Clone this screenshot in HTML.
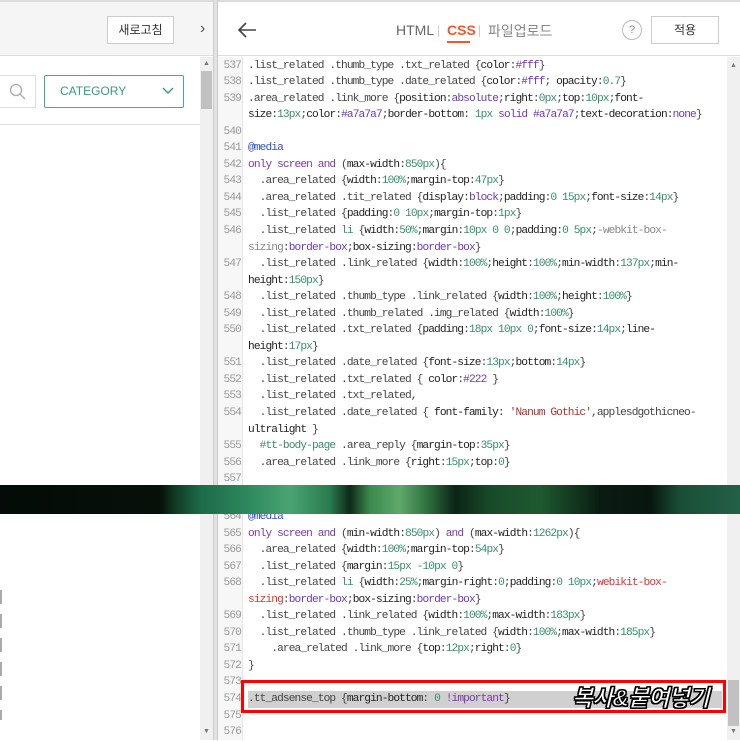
<!DOCTYPE html>
<html><head><meta charset="utf-8"><style>
*{margin:0;padding:0;box-sizing:border-box}
body{width:740px;height:740px;overflow:hidden;background:#fff;position:relative;font-family:"Liberation Sans","Noto Sans CJK KR",sans-serif}
.abs{position:absolute}
.code{position:absolute;left:218px;width:509px;font-family:"Liberation Mono","DejaVu Sans Mono",monospace;font-size:11.2px;letter-spacing:-0.9px;color:#444}
.r{height:16.55px;line-height:16.55px;white-space:pre;position:relative;padding-left:30px}
.n{position:absolute;left:0;width:23px;text-align:right;color:#999}
.g{color:#3b8c6e}.p{color:#6b3bb0}.k{color:#7a3aa8}.b{color:#3050c8}.red{color:#d33}.s{color:#a33}.d{color:#222}
</style></head><body>
<div class="abs" style="left:0;top:0;width:740px;height:56px;background:#f5f5f5;border-bottom:1px solid #ddd"></div>
<div class="abs" style="left:0;top:0;width:740px;height:2px;background:#ddd"></div>
<div class="abs" style="left:107px;top:16px;width:67px;height:28px;border:1px solid #ccc;background:#fff;font-size:12px;line-height:26px;text-align:center;color:#333">새로고침</div>
<div class="abs" style="left:200px;top:20px;font-size:16px;color:#555">›</div>
<div class="abs" style="left:213px;top:0;width:5px;height:740px;background:#e2e2e2;border-left:1px solid #ccc;border-right:1px solid #ccc"></div>
<div class="abs" style="left:218px;top:2px;width:522px;height:54px;background:#fff;border-bottom:1px solid #ddd"></div>
<svg class="abs" style="left:236px;top:20px" width="22" height="20"><path d="M20 10H3M10 3L3 10L10 17" fill="none" stroke="#444" stroke-width="1.6"/></svg>
<div class="abs" style="left:396px;top:22px;font-size:14px;color:#666">HTML</div>
<div class="abs" style="left:438px;top:25px;width:1px;height:12px;background:#ccc"></div>
<div class="abs" style="left:447px;top:22px;font-size:14px;color:#f05a28;font-weight:bold">CSS</div>
<div class="abs" style="left:447px;top:41px;width:23px;height:2px;background:#f05a28"></div>
<div class="abs" style="left:479px;top:25px;width:1px;height:12px;background:#ccc"></div>
<div class="abs" style="left:488px;top:21px;font-size:14px;color:#888">파일업로드</div>
<div class="abs" style="left:622px;top:20px;width:20px;height:20px;border:1px solid #bbb;border-radius:50%;font-size:11px;line-height:18px;text-align:center;color:#888">?</div>
<div class="abs" style="left:651px;top:16px;width:68px;height:28px;border:1px solid #ccc;background:#fff;font-size:12px;line-height:26px;text-align:center;color:#333">적용</div>
<div class="abs" style="left:0;top:75px;width:36px;height:33px;border:1px solid #ddd;border-left:none"></div>
<svg class="abs" style="left:9px;top:83px" width="18" height="18"><circle cx="7" cy="7" r="5.5" fill="none" stroke="#aaa" stroke-width="1.3"/><path d="M11 11L16 16" stroke="#aaa" stroke-width="1.3"/></svg>
<div class="abs" style="left:44px;top:75px;width:140px;height:33px;border:1px solid #3fae8e;border-radius:2px;font-size:12px;line-height:31px;padding-left:15px;color:#3a9a7e">CATEGORY</div>
<svg class="abs" style="left:162px;top:87px" width="12" height="8"><path d="M1 1L6 6L11 1" fill="none" stroke="#3a9a7e" stroke-width="1.4"/></svg>
<div class="abs" style="left:0;top:124px;width:200px;height:1px;background:#ddd"></div>
<div class="abs" style="left:200px;top:57px;width:13px;height:683px;background:#f0f0f0"></div>
<div class="abs" style="left:201px;top:71px;width:11px;height:38px;background:#c1c1c1"></div>
<div class="abs" style="left:203px;top:60px;font-size:7px;color:#777">▲</div>
<div class="abs" style="left:203px;top:728px;font-size:7px;color:#777">▼</div>
<div class="abs" style="left:0;top:580px;width:2px;height:140px;background:repeating-linear-gradient(#fff 0,#fff 10px,#aaa 10px,#aaa 24px)"></div>
<div class="abs" style="left:218px;top:57px;width:25px;height:683px;background:#f7f7f7;border-right:1px solid #e6e6e6"></div>
<div class="abs" style="left:727px;top:57px;width:13px;height:683px;background:#f0f0f0"></div>
<div class="abs" style="left:728px;top:680px;width:11px;height:46px;background:#c1c1c1"></div>
<div class="abs" style="left:730px;top:62px;font-size:7px;color:#777">▲</div>
<div class="abs" style="left:730px;top:728px;font-size:7px;color:#777">▼</div>
<div class="code" style="top:57.5px">
<div class="r"><span class="n">537</span>.list_related .thumb_type .txt_related {<span class="d">color</span>:<span class="p">#fff</span>}</div>
<div class="r"><span class="n">538</span>.list_related .thumb_type .date_related {<span class="d">color</span>:<span class="p">#fff</span>; <span class="d">opacity</span>:<span class="g">0.7</span>}</div>
<div class="r"><span class="n">539</span>.area_related .link_more {<span class="d">position</span>:<span class="p">absolute</span>;<span class="d">right</span>:<span class="g">0px</span>;<span class="d">top</span>:<span class="g">10px</span>;<span class="d">font-</span></div>
<div class="r"><span class="d">size</span>:<span class="g">13px</span>;<span class="d">color</span>:<span class="p">#a7a7a7</span>;<span class="d">border-bottom</span>: <span class="g">1px</span> <span class="p">solid</span> <span class="p">#a7a7a7</span>;<span class="d">text-decoration</span>:<span class="p">none</span>}</div>
<div class="r"><span class="n">540</span></div>
<div class="r"><span class="n">541</span><span class="b">@media</span></div>
<div class="r"><span class="n">542</span><span class="k">only screen and</span> (<span class="d">max-width</span>:<span class="g">850px</span>){</div>
<div class="r"><span class="n">543</span>  .area_related {<span class="d">width</span>:<span class="g">100%</span>;<span class="d">margin-top</span>:<span class="g">47px</span>}</div>
<div class="r"><span class="n">544</span>  .area_related .tit_related {<span class="d">display</span>:<span class="p">block</span>;<span class="d">padding</span>:<span class="g">0 15px</span>;<span class="d">font-size</span>:<span class="g">14px</span>}</div>
<div class="r"><span class="n">545</span>  .list_related {<span class="d">padding</span>:<span class="g">0 10px</span>;<span class="d">margin-top</span>:<span class="g">1px</span>}</div>
<div class="r"><span class="n">546</span>  .list_related <span class="g">li</span> {<span class="d">width</span>:<span class="g">50%</span>;<span class="d">margin</span>:<span class="g">10px 0 0</span>;<span class="d">padding</span>:<span class="g">0 5px</span>;<span style="color:#888">-webkit-box-</span></div>
<div class="r"><span style="color:#888">sizing</span>:<span class="p">border-box</span>;<span class="d">box-sizing</span>:<span class="p">border-box</span>}</div>
<div class="r"><span class="n">547</span>  .list_related .link_related {<span class="d">width</span>:<span class="g">100%</span>;<span class="d">height</span>:<span class="g">100%</span>;<span class="d">min-width</span>:<span class="g">137px</span>;<span class="d">min-</span></div>
<div class="r"><span class="d">height</span>:<span class="g">150px</span>}</div>
<div class="r"><span class="n">548</span>  .list_related .thumb_type .link_related {<span class="d">width</span>:<span class="g">100%</span>;<span class="d">height</span>:<span class="g">100%</span>}</div>
<div class="r"><span class="n">549</span>  .list_related .thumb_related .img_related {<span class="d">width</span>:<span class="g">100%</span>}</div>
<div class="r"><span class="n">550</span>  .list_related .txt_related {<span class="d">padding</span>:<span class="g">18px 10px 0</span>;<span class="d">font-size</span>:<span class="g">14px</span>;<span class="d">line-</span></div>
<div class="r"><span class="d">height</span>:<span class="g">17px</span>}</div>
<div class="r"><span class="n">551</span>  .list_related .date_related {<span class="d">font-size</span>:<span class="g">13px</span>;<span class="d">bottom</span>:<span class="g">14px</span>}</div>
<div class="r"><span class="n">552</span>  .list_related .txt_related { <span class="d">color</span>:<span class="p">#222</span> }</div>
<div class="r"><span class="n">553</span>  .list_related .txt_related,</div>
<div class="r"><span class="n">554</span>  .list_related .date_related { <span class="d">font-family</span>: <span class="s">'Nanum Gothic'</span>,applesdgothicneo-</div>
<div class="r"><span class="d">ultralight</span> }</div>
<div class="r"><span class="n">555</span>  <span class="g">#tt-body-page</span> .area_reply {<span class="d">margin-top</span>:<span class="g">35px</span>}</div>
<div class="r"><span class="n">556</span>  .area_related .link_more {<span class="d">right</span>:<span class="g">15px</span>;<span class="d">top</span>:<span class="g">0</span>}</div>
<div class="r"><span class="n">557</span></div>
</div>
<div class="code" style="top:509px">
<div class="r"><span class="n">564</span><span class="b">@media</span></div>
<div class="r"><span class="n">565</span><span class="k">only screen and</span> (<span class="d">min-width</span>:<span class="g">850px</span>) <span class="k">and</span> (<span class="d">max-width</span>:<span class="g">1262px</span>){</div>
<div class="r"><span class="n">566</span>  .area_related {<span class="d">width</span>:<span class="g">100%</span>;<span class="d">margin-top</span>:<span class="g">54px</span>}</div>
<div class="r"><span class="n">567</span>  .list_related {<span class="d">margin</span>:<span class="g">15px -10px 0</span>}</div>
<div class="r"><span class="n">568</span>  .list_related <span class="g">li</span> {<span class="d">width</span>:<span class="g">25%</span>;<span class="d">margin-right</span>:<span class="g">0</span>;<span class="d">padding</span>:<span class="g">0 10px</span>;<span class="red">webikit-box-</span></div>
<div class="r"><span class="red">sizing</span>:<span class="p">border-box</span>;<span class="d">box-sizing</span>:<span class="p">border-box</span>}</div>
<div class="r"><span class="n">569</span>  .list_related .link_related {<span class="d">width</span>:<span class="g">100%</span>;<span class="d">max-width</span>:<span class="g">183px</span>}</div>
<div class="r"><span class="n">570</span>  .list_related .thumb_type .link_related {<span class="d">width</span>:<span class="g">100%</span>;<span class="d">max-width</span>:<span class="g">185px</span>}</div>
<div class="r"><span class="n">571</span>    .area_related .link_more {<span class="d">top</span>:<span class="g">12px</span>;<span class="d">right</span>:<span class="g">0</span>}</div>
<div class="r"><span class="n">572</span>}</div>
<div class="r"><span class="n">573</span></div>
<div class="r"><span class="n">574</span><span style="background:#d0d0d0;display:inline-block;width:474px">.tt_adsense_top {<span class="d">margin-bottom</span>: <span class="g">0</span> <span class="k">!important</span>}</span></div>
<div class="r"><span class="n">575</span></div>
<div class="r"><span class="n">576</span></div>
</div>
<div class="abs" style="left:0;top:485px;width:740px;height:29px;background:linear-gradient(90deg,#040b08 0,#061009 160px,#0f3a24 175px,#1c6a48 200px,#2f8a5e 250px,#4aa472 290px,#2a7a4e 330px,#0e2a18 350px,#3c8a4e 370px,#5fa86a 400px,#2a6a3a 430px,#0c2416 455px,#184a2a 490px,#1e5a30 540px,#0a1c12 600px,#081610 650px,#1a4e36 680px,#236048 740px)"></div>
<div class="abs" style="left:241px;top:680px;width:485px;height:33px;border:3px solid #f00"></div>
<div class="abs" style="left:572px;top:679px;font-size:23px;font-weight:bold;font-style:italic;color:#fff;letter-spacing:-1px;-webkit-text-stroke:1px #000;text-shadow:1px 1px 0 #000,-1px -1px 0 #000,1px -1px 0 #000,-1px 1px 0 #000">복사&amp;붙여넣기</div>
</body></html>
